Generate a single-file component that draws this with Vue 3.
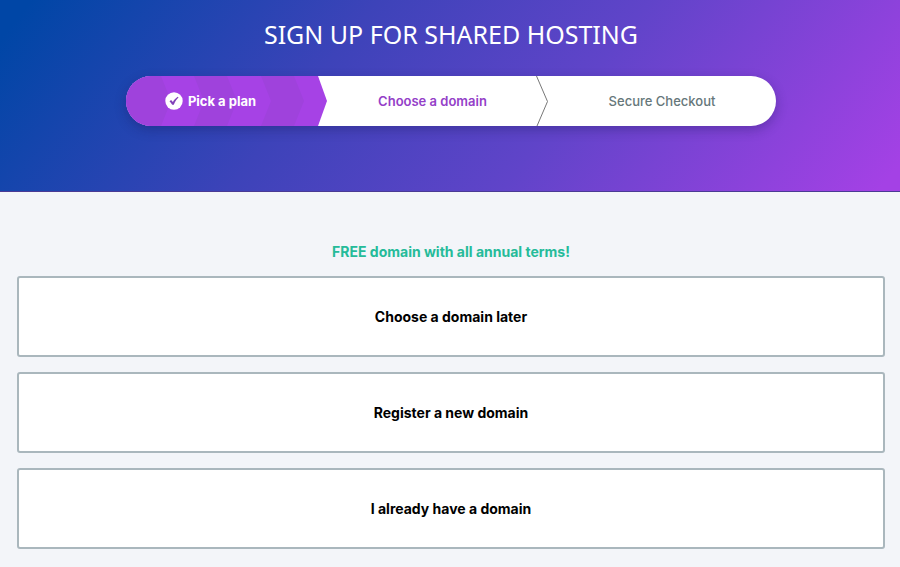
<script setup>
const options = [
  { id: 'later', label: 'Choose a domain later' },
  { id: 'register', label: 'Register a new domain' },
  { id: 'existing', label: 'I already have a domain' },
]
</script>

<template>
  <div class="page">
    <header class="hero">
      <h1 class="title">SIGN UP FOR SHARED HOSTING</h1>
      <ol class="steps">
        <li class="step done">
          <svg class="pattern" viewBox="0 0 201 50" preserveAspectRatio="none" aria-hidden="true">
            <path d="M0 0H192L201 25L192 50H0Z" fill="#a642e5" />
            <path d="M0 0H35L45 25L35 50H0Z" fill="#9f42dc" />
            <path d="M68 0H101L111 25L101 50H68L78 25Z" fill="#9f42dc" />
            <path d="M135 0H168L178 25L168 50H135L145 25Z" fill="#9f42dc" />
          </svg>
          <svg class="check" viewBox="0 0 18 18" aria-hidden="true">
            <circle cx="9" cy="9" r="8.7" fill="#fff" />
            <path d="M4.5 9.2L6.1 7.9L7.9 9.9C8.9 7.9 10.4 6.2 12.8 4.7L13.5 5.5C11.5 7.3 9.8 9.8 8.8 12.8H7.2C6.5 11.5 5.6 10.3 4.5 9.2Z" fill="#8140b8" />
          </svg>
          <span class="label">Pick a plan</span>
        </li>
        <li class="step current" aria-current="step">
          <span class="label">Choose a domain</span>
          <svg class="divider" viewBox="0 0 12 50" aria-hidden="true">
            <path d="M0.5 0L11.5 25.5L1 50" fill="none" stroke="#777" stroke-width="1" />
          </svg>
        </li>
        <li class="step upcoming">
          <span class="label">Secure Checkout</span>
        </li>
      </ol>
    </header>

    <main class="content">
      <p class="promo">FREE domain with all annual terms!</p>
      <div class="options">
        <button v-for="option in options" :key="option.id" type="button" class="option">
          {{ option.label }}
        </button>
      </div>
    </main>
  </div>
</template>

<style>
body {
  margin: 0;
  background: #f3f5f9;
}
</style>

<style scoped>
.page {
  font-family: Inter, "Liberation Sans", sans-serif;
}

.hero {
  box-sizing: border-box;
  padding: 16px 16px 65px 18px;
  border-bottom: 1px solid #4a3a94;
  background: linear-gradient(128deg, #0046a6 3%, #3d43b9 36%, #6044c9 62%, #a441e5 98%);
}

.title {
  margin: 0 0 24px;
  color: #fff;
  font-family: "Noto Sans", "Open Sans", sans-serif;
  font-size: 25px;
  font-weight: 400;
  line-height: 36px;
  text-align: center;
}

.steps {
  display: grid;
  grid-template-columns: 201fr 221fr 228fr;
  max-width: 650px;
  margin: 0 auto;
  padding: 0;
  overflow: hidden;
  border-radius: 25px;
  background: #fff;
  box-shadow: 0 4px 12px rgba(20, 20, 80, 0.3);
  list-style: none;
}

.step {
  position: relative;
  display: flex;
  align-items: center;
  justify-content: center;
  height: 50px;
  font-size: 13px;
  line-height: 20px;
}

.done {
  gap: 5px;
  padding-right: 32px;
  color: #fff;
  font-weight: 700;
}

.current {
  padding-right: 10px;
  color: #9440c8;
  font-weight: 600;
}

.upcoming {
  color: #66777a;
  font-weight: 500;
}

.pattern {
  position: absolute;
  inset: 0;
  width: 100%;
  height: 100%;
}

.check {
  position: relative;
  width: 18px;
  height: 18px;
}

.label {
  position: relative;
}

.divider {
  position: absolute;
  top: 0;
  right: 0;
  width: 12px;
  height: 50px;
}

.content {
  padding: 48px 15px 18px 17px;
}

.promo {
  margin: 0 0 12px;
  color: #25bb99;
  font-size: 14px;
  font-weight: 700;
  line-height: 24px;
  text-align: center;
}

.options {
  display: grid;
  gap: 15px;
}

.option {
  width: 100%;
  min-height: 81px;
  padding: 16px;
  border: 2px solid #aab7bd;
  border-radius: 3px;
  background: #fff;
  color: #000;
  font-family: inherit;
  font-size: 14px;
  font-weight: 700;
  line-height: 24px;
  cursor: pointer;
}
</style>
